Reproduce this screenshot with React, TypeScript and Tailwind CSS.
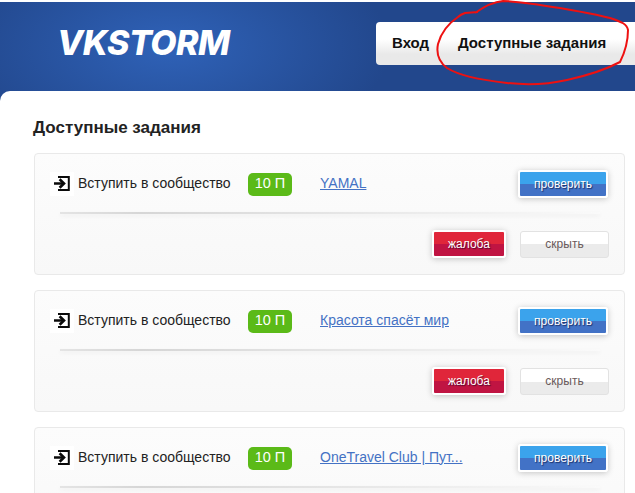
const tasks = [
  { id: 1, title: "YAMAL" },
  { id: 2, title: "Красота спасёт мир" },
  { id: 3, title: "OneTravel Club | Пут..." },
];

function EnterIcon() {
  return (
    <span className="flex h-6 w-6 shrink-0 items-center justify-center bg-white">
      <svg width="16" height="16" viewBox="0 0 16 16" fill="none" stroke="#0a0a0a">
        <path d="M4 1 H14.8 V14 H4" strokeWidth="2" />
        <path d="M0 7.5 H9" strokeWidth="2.6" />
        <path d="M5.6 3.2 L10 7.5 L5.6 11.8" strokeWidth="2.6" />
      </svg>
    </span>
  );
}

function TaskCard({ title }: { title: string }) {
  return (
    <div className="h-[122px] overflow-hidden rounded-[4px] border border-[#e9e9e9] bg-linear-to-b from-[#fcfcfc] to-[#f8f8f8] pt-[16px] pr-[16px] pl-[15px]">
      <div className="flex h-[28px] items-center">
        <EnterIcon />
        <span className="mb-[2px] ml-1 w-[170px] shrink-0 text-[14px] text-[#222]">Вступить в сообщество</span>
        <span className="flex h-[23px] w-[44px] shrink-0 items-center justify-center rounded-[5px] bg-[#5bba18] text-[14.5px] font-medium text-white">
          10 П
        </span>
        <a href="#" className="mb-[2px] ml-[28px] text-[14px] text-[#4472c4] underline">
          {title}
        </a>
        <button className="ml-auto h-[28px] w-[90px] rounded-[3px] border-2 border-white bg-linear-to-b from-[#3ba3ec] from-50% to-[#4272c6] to-50% text-[12px] text-white shadow-[0_1px_6px_rgba(0,0,0,0.22)] [text-shadow:1px_1px_1px_rgba(0,0,40,0.6)]">
          проверить
        </button>
      </div>
      <div className="mt-[14px] ml-[10px] h-[2px] w-[540px] bg-linear-to-r from-[#e4e4e4] via-[#d6d6d6] via-15% to-transparent shadow-[0_2px_4px_rgba(0,0,0,0.06)]" />
      <div className="mt-[16px] mr-[-1px] flex items-center justify-end">
        <button className="h-[28px] w-[74px] rounded-[3px] border-2 border-white bg-linear-to-b from-[#e0263a] from-50% to-[#c01442] to-50% text-[12px] text-white shadow-[0_1px_6px_rgba(0,0,0,0.22)] [text-shadow:1px_1px_1px_rgba(40,0,40,0.7)]">
          жалоба
        </button>
        <button className="ml-[14px] h-[27px] w-[89px] rounded-[3px] border border-[#e2e2e2] bg-linear-to-b from-white from-50% to-[#ebebeb] to-50% text-[12px] text-[#6a5a5a]">
          скрыть
        </button>
      </div>
    </div>
  );
}

export default function App() {
  return (
    <div className="relative h-[493px] w-[635px] overflow-hidden bg-white font-['Liberation_Sans',Arial,sans-serif]">
      <header className="mt-[2px] flex h-[110px] items-start justify-between bg-[radial-gradient(ellipse_220px_110px_at_170px_45px,#2f62b8,#22478c)]">
        <div className="mt-[21px] ml-[57px] font-['Inter',sans-serif] text-[34px] leading-[40px] font-extrabold tracking-[-0.5px] text-white italic">
          VKSTORM
        </div>
        <nav className="mt-[20px] flex h-[43px] w-[259px] items-center rounded-l-[4px] bg-linear-to-b from-white from-40% to-[#e9e9e9] to-75% pl-[16px] text-[15px] font-bold text-[#111]">
          <span className="w-[36px] whitespace-nowrap">Вход</span>
          <span className="ml-[30px] whitespace-nowrap">Доступные задания</span>
        </nav>
      </header>
      <main className="absolute inset-x-0 top-[91px] rounded-tl-[10px] bg-white pt-[27px] pl-[33px]">
        <h1 className="text-[17px] leading-[20px] font-bold text-[#222]">Доступные задания</h1>
        <div className="mt-[15px] mr-[10px] ml-px flex flex-col gap-[15px]">
          {tasks.map((t) => (
            <TaskCard key={t.id} title={t.title} />
          ))}
        </div>
      </main>
      {/* обводка от руки поверх меню */}
      <svg className="pointer-events-none absolute inset-0" width="635" height="493" fill="none">
        <path
          d="M478 12 L465 13 C462 14 460 15 458 17 C449 23 441 33 438 44 C436 54 439 62 447 68 C458 75 480 80 507 83 C525 85 545 85 567 80 C585 76 605 70 620 62 C625 52 628 40 628 30 C627 24 622 22 610 18 C590 13 560 8 540 5 C525 3 512 1 503 1 C492 2 482 8 475 13"
          stroke="#ee1111"
          strokeWidth="2"
        />
      </svg>
    </div>
  );
}
